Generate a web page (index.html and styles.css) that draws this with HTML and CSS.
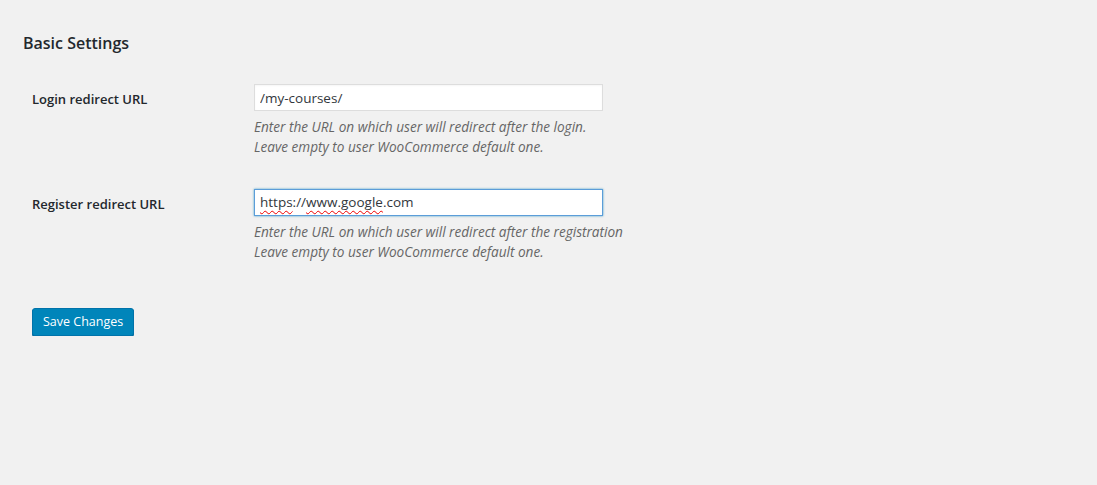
FILE: index.html
```html
<!DOCTYPE html>
<html>
<head>
<meta charset="utf-8">
<link rel="stylesheet" href="styles.css">
</head>
<body>
<div class="wrap">
  <h2 class="title">Basic Settings</h2>
  <form class="settings">
    <div class="row">
      <label class="label" for="login">Login redirect URL</label>
      <div class="field">
        <input class="text" id="login" type="text" value="/my-courses/">
        <p class="desc">Enter the URL on which user will redirect after the login.<br>Leave empty to user WooCommerce default one.</p>
      </div>
    </div>
    <div class="row">
      <label class="label" for="reg">Register redirect URL</label>
      <div class="field">
        <div class="text focus"><span class="sp">https</span>://<span class="sp">www.google</span>.com</div>
        <p class="desc">Enter the URL on which user will redirect after the registration<br>Leave empty to user WooCommerce default one.</p>
      </div>
    </div>
    <div class="submit">
      <button type="button" class="btn">Save Changes</button>
    </div>
  </form>
</div>
</body>
</html>
```
FILE: styles.css
```css
html, body {
  margin: 0;
  padding: 0;
  background: #f1f1f1;
  color: #23282d;
  font-family: "Open Sans", "Noto Sans", sans-serif;
  font-size: 13px;
}
.wrap {
  padding: 0 0 0 23px;
}
.title {
  margin: 0;
  padding-top: 31px;
  font-size: 16px;
  font-weight: 600;
  line-height: 24px;
  color: #23282d;
}
.settings {
  margin-top: 13px;
  padding-left: 9px;
}
.row {
  display: flex;
  padding: 15px 0;
}
.row + .row {
  padding-top: 16px;
}
.label {
  width: 222px;
  flex: none;
  padding-top: 7px;
  font-size: 13px;
  font-weight: 600;
  line-height: 18px;
}
.field {
  display: flex;
  flex-direction: column;
}
.text {
  box-sizing: border-box;
  width: 349px;
  height: 27px;
  margin: 1px 0 0;
  padding: 0 5px;
  border: 1px solid #ddd;
  background: #fff;
  font-family: inherit;
  font-size: 13.5px;
  line-height: 25px;
  color: #32373c;
  box-shadow: inset 0 1px 2px rgba(0,0,0,0.04);
  outline: none;
}
.text.focus {
  border-color: #5b9dd9;
  box-shadow: 0 0 2px rgba(30,140,190,0.8);
}
.sp {
  text-decoration: underline wavy #e00;
  text-decoration-thickness: 1px;
  text-underline-offset: 3px;
}
.desc {
  margin: 6px 0 0;
  font-size: 13.6px;
  font-style: italic;
  line-height: 20px;
  color: #666;
}
.submit {
  padding-top: 31px;
}
.btn {
  height: 28px;
  padding: 0 10px 1px;
  border: 1px solid #0073aa;
  border-radius: 3px;
  background: #0085ba;
  color: #fff;
  font-family: inherit;
  font-size: 12.5px;
  line-height: 25px;
  box-shadow: 0 1px 0 #006799;
  cursor: pointer;
}
```
